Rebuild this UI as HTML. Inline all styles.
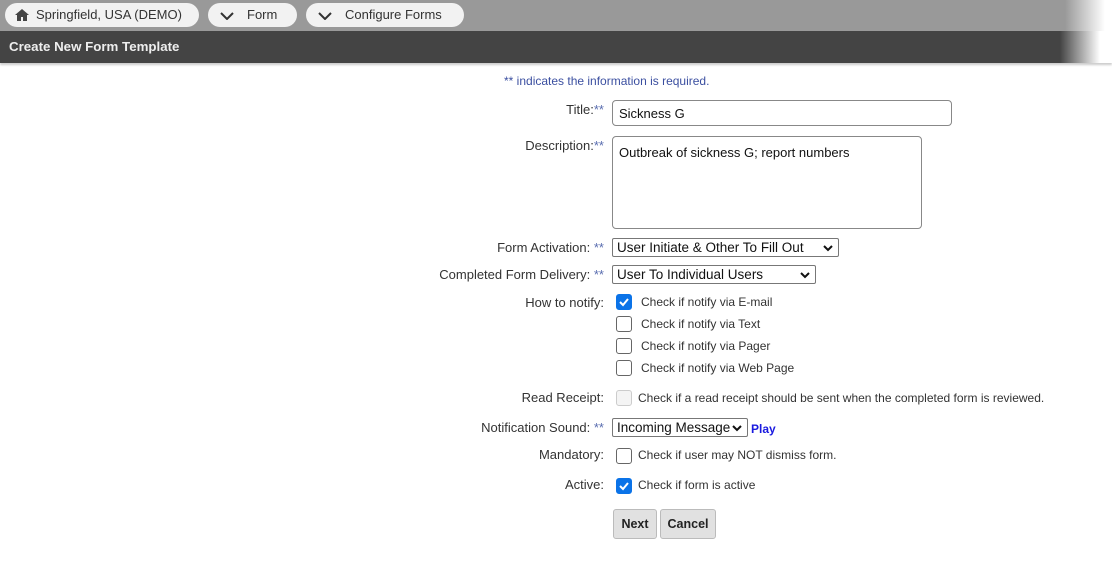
<!DOCTYPE html>
<html><head><style>
body{margin:0;width:1112px;height:566px;position:relative;overflow:hidden;background:#fff;font-family:"Liberation Sans",sans-serif;color:#333;font-size:13px}
.top{position:absolute;left:0;top:0;width:1112px;height:31px;background:linear-gradient(to right,#999 0,#999 1065px,#fff 1105px)}
.bar{position:absolute;left:0;top:31px;width:1112px;height:32px;background:linear-gradient(to right,#444 0,#444 1060px,#fff 1100px);box-shadow:0 2px 2px #ccc}
.bar span{position:absolute;left:9px;top:8px;color:#eee;font-size:13.3px;font-weight:bold}
.crumb{position:absolute;top:3px;height:24px;background:#f2f2f2;border-radius:12px;font-size:13px;line-height:24px;color:#333}
.a{position:absolute;font-size:12px;white-space:nowrap}
.l{position:absolute;right:508px;text-align:right;white-space:nowrap;font-size:13px}
.s{color:#5a6eb0}
.inp{position:absolute;border:1px solid #888;border-radius:4px;background:#fff;font-size:13px;color:#111}
.sel{position:absolute;border:1px solid #777;border-radius:2px;line-height:17px;font-size:13.5px;color:#111;padding-left:4px;box-sizing:border-box;height:19px}
.sel svg{position:absolute;right:5px;top:6px}
.cb{position:absolute;width:14px;height:14px;border:1px solid #666;border-radius:3px;background:#fff}
.cb.on{background:#0b73e8;border-color:#0b73e8}
.cb.dis{background:#f4f4f4;border-color:#ccc}
.btn{position:absolute;top:509px;height:28px;background:#e1e1e1;border:1px solid #bbb;border-radius:3px;font-weight:bold;font-size:12.5px;line-height:28px;text-align:center;color:#222}
</style></head><body>
<div class="top"></div>
<div class="crumb" style="left:5px;width:194px"><svg style="position:absolute;left:10px;top:6px" width="14" height="12" viewBox="0 0 14 12"><path d="M7 0L0 6h2v6h4V8h2v4h4V6h2z" fill="#444"/></svg><span style="position:absolute;left:31px">Springfield, USA (DEMO)</span></div>
<div class="crumb" style="left:208px;width:89px"><svg style="position:absolute;left:12px;top:9px" width="14" height="8" viewBox="0 0 14 8"><path d="M1 1l6 6 6-6" stroke="#333" stroke-width="2" fill="none"/></svg><span style="position:absolute;left:39px">Form</span></div>
<div class="crumb" style="left:306px;width:158px"><svg style="position:absolute;left:12px;top:9px" width="14" height="8" viewBox="0 0 14 8"><path d="M1 1l6 6 6-6" stroke="#333" stroke-width="2" fill="none"/></svg><span style="position:absolute;left:39px">Configure Forms</span></div>
<div class="bar"><span>Create New Form Template</span></div>

<div class="a" style="left:504px;top:74px;color:#3b4fa0;font-size:12px">** indicates the information is required.</div>

<div class="l" style="top:102px">Title:<span class="s">**</span></div>
<div class="inp" style="left:612px;top:100px;height:26px;line-height:26px;padding-left:6px;box-sizing:border-box;width:340px">Sickness G</div>
<div class="l" style="top:138px">Description:<span class="s">**</span></div>
<div class="inp" style="left:612px;top:136px;width:310px;height:93px;padding:8px 6px;box-sizing:border-box">Outbreak of sickness G; report numbers</div>

<div class="l" style="top:240px">Form Activation: <span class="s">**</span></div>
<div class="sel" style="left:612px;top:238px;width:227px">User Initiate &amp; Other To Fill Out<svg width="10" height="7" viewBox="0 0 10 7"><path d="M1 1l4 4 4-4" stroke="#111" stroke-width="2" fill="none"/></svg></div>
<div class="l" style="top:267px">Completed Form Delivery: <span class="s">**</span></div>
<div class="sel" style="left:612px;top:265px;width:204px">User To Individual Users<svg width="10" height="7" viewBox="0 0 10 7"><path d="M1 1l4 4 4-4" stroke="#111" stroke-width="2" fill="none"/></svg></div>

<div class="l" style="top:295px">How to notify:</div>
<div class="cb on" style="left:616px;top:294px"><svg width="14" height="14"><path d="M3 7l3 3 5-6" stroke="#fff" stroke-width="2" fill="none"/></svg></div>
<div class="a" style="left:641px;top:295px">Check if notify via E-mail</div>
<div class="cb" style="left:616px;top:316px"></div>
<div class="a" style="left:641px;top:317px">Check if notify via Text</div>
<div class="cb" style="left:616px;top:338px"></div>
<div class="a" style="left:641px;top:339px">Check if notify via Pager</div>
<div class="cb" style="left:616px;top:360px"></div>
<div class="a" style="left:641px;top:361px">Check if notify via Web Page</div>

<div class="l" style="top:390px">Read Receipt:</div>
<div class="cb dis" style="left:616px;top:390px"></div>
<div class="a" style="left:638px;top:391px">Check if a read receipt should be sent when the completed form is reviewed.</div>

<div class="l" style="top:420px">Notification Sound: <span class="s">**</span></div>
<div class="sel" style="left:612px;top:418px;width:136px">Incoming Message<svg width="10" height="7" viewBox="0 0 10 7"><path d="M1 1l4 4 4-4" stroke="#111" stroke-width="2" fill="none"/></svg></div>
<div class="a" style="left:751px;top:422px;color:#1a1adf;font-weight:bold;font-size:12px">Play</div>

<div class="l" style="top:447px">Mandatory:</div>
<div class="cb" style="left:616px;top:448px"></div>
<div class="a" style="left:638px;top:448px">Check if user may NOT dismiss form.</div>

<div class="l" style="top:477px">Active:</div>
<div class="cb on" style="left:616px;top:478px"><svg width="14" height="14"><path d="M3 7l3 3 5-6" stroke="#fff" stroke-width="2" fill="none"/></svg></div>
<div class="a" style="left:638px;top:478px">Check if form is active</div>

<div class="btn" style="left:613px;width:42px">Next</div>
<div class="btn" style="left:660px;width:54px">Cancel</div>
</body></html>
